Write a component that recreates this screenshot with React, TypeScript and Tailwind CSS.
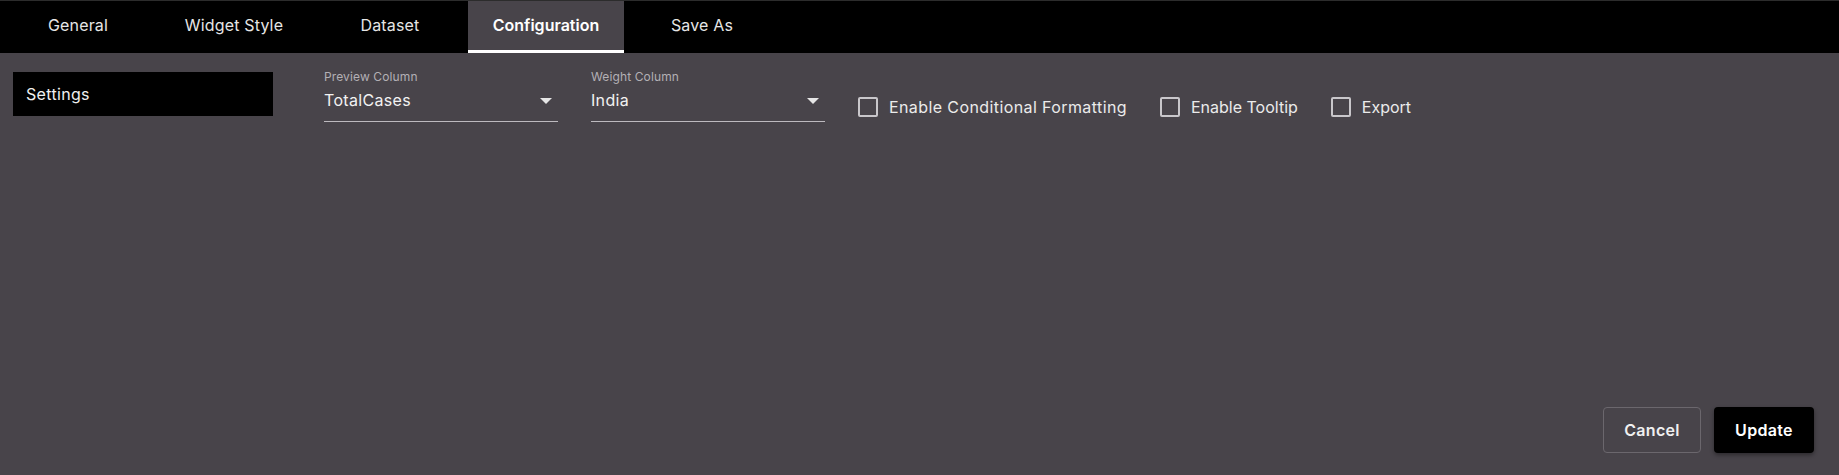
import React from "react";

const tabs = ["General", "Widget Style", "Dataset", "Configuration", "Save As"];

function Field({ label, value }: { label: string; value: string }) {
  return (
    <div className="w-[234px] flex flex-col">
      <div className="text-[12px] leading-[14px] h-[14px] text-[#b3b0b5] tracking-[0.01em]">{label}</div>
      <div className="flex items-start justify-between h-[38px] border-b border-[#bdbabf]">
        <span className="text-[16px] text-[#f2f2f2] leading-[20px] mt-[6px] tracking-[0.02em]">{value}</span>
        <svg width="12" height="6" viewBox="0 0 12 6" className="mr-[6px] mt-[14px]">
          <path d="M0 0 L12 0 L6 6 Z" fill="#e6e6e6" />
        </svg>
      </div>
    </div>
  );
}

function Check({ label, tight }: { label: string; tight?: boolean }) {
  return (
    <label className="flex items-center gap-[11px] h-[20px]">
      <span className="w-[20px] h-[20px] border-2 border-[#c9c7cb] rounded-[2px]" />
      <span
        className={
          tight
            ? "text-[16px] text-[#ebebeb] leading-[20px] tracking-normal"
            : "text-[16px] text-[#ebebeb] leading-[20px] tracking-[0.025em]"
        }
      >
        {label}
      </span>
    </label>
  );
}

export default function App() {
  return (
    <div
      className="w-[1839px] h-[475px] flex flex-col bg-[#48444a] overflow-hidden"
      style={{ fontFamily: "Inter, 'Noto Sans', sans-serif" }}
    >
      <div className="h-[53px] bg-black border-t border-[#2c2c2c] flex">
        {tabs.map((t) =>
          t === "Configuration" ? (
            <div
              key={t}
              className="w-[156px] bg-[#48444a] border-b-[3px] border-white flex items-center justify-center text-[16px] font-semibold text-white pb-[2px]"
            >
              {t}
            </div>
          ) : (
            <div
              key={t}
              className="w-[156px] flex items-center justify-center text-[16px] text-[#e6e6e6] pb-[4px] tracking-[0.01em]"
            >
              {t}
            </div>
          )
        )}
      </div>
      <div className="flex-1 flex flex-col">
        <div className="flex pt-[19px]">
          <div className="w-[260px] h-[44px] ml-[13px] bg-black flex items-center pl-[13px] text-[16px] text-[#f0f0f0] tracking-[0.02em]">
            Settings
          </div>
          <div className="flex ml-[51px] gap-[33px] items-start mt-[-2px]">
            <Field label="Preview Column" value="TotalCases" />
            <Field label="Weight Column" value="India" />
            <div className="flex gap-[33px] mt-[27px]">
              <Check label="Enable Conditional Formatting" />
              <Check label="Enable Tooltip" tight />
              <Check label="Export" tight />
            </div>
          </div>
        </div>
        <div className="mt-auto flex justify-end gap-[13px] pr-[25px] pb-[22px]">
          <button className="w-[98px] h-[46px] rounded-[4px] border border-[#6b676d] text-[16px] font-semibold text-[#f0f0f0] tracking-[0.02em]">
            Cancel
          </button>
          <button className="w-[100px] h-[46px] rounded-[4px] bg-black text-[16px] font-semibold text-white tracking-[0.02em] shadow-[0_2px_4px_rgba(0,0,0,0.4)]">
            Update
          </button>
        </div>
      </div>
    </div>
  );
}
